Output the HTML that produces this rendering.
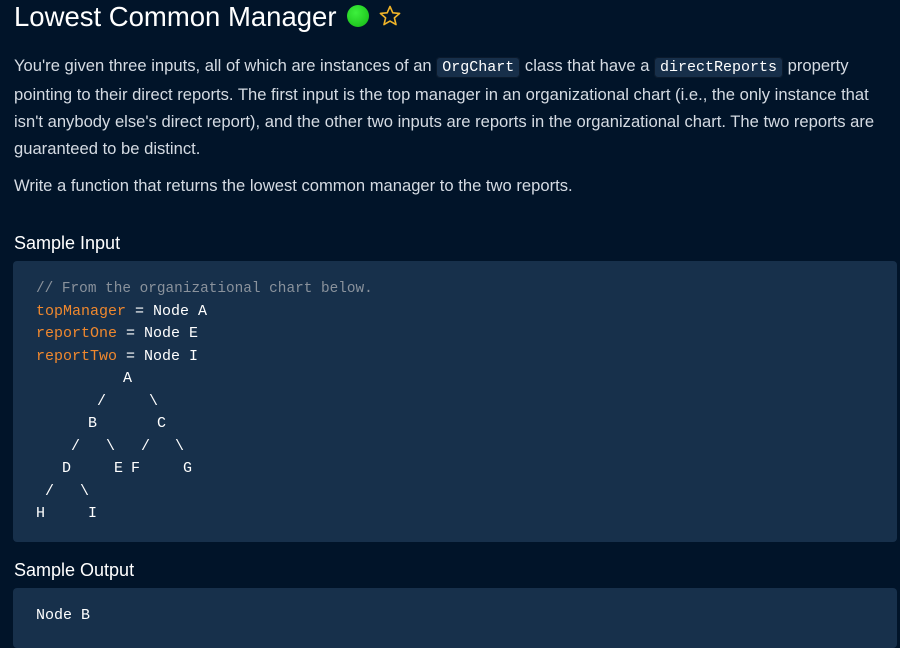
<!DOCTYPE html>
<html><head><meta charset="utf-8"><style>
body{margin:0;background:#011429;width:900px;height:640px;overflow:hidden;font-family:"Liberation Sans",sans-serif;color:#d5dbe3}
h1{position:absolute;left:14px;top:1px;margin:0;font-weight:normal;font-size:27.5px;color:#fff;white-space:nowrap}
.dot{display:inline-block;width:22px;height:22px;border-radius:50%;background:radial-gradient(circle at 40% 35%,#3df03d,#14b814);vertical-align:-1px;margin-left:10px}
.p{position:absolute;left:14px;font-size:16.6px;line-height:27px;white-space:nowrap}
code{font-family:"Liberation Mono",monospace;font-size:15px;background:#172f4a;color:#fff;border:1px solid #0b1a2c;border-radius:4px;padding:1px 5px}
.h{position:absolute;left:14px;font-size:18px;color:#fff}
.box{position:absolute;left:13px;width:884px;background:#17304b;border-radius:4px}
.m{position:absolute;font-family:"Liberation Mono",monospace;font-size:15px;color:#fff;white-space:pre;line-height:22.5px}
.o{color:#f0882e}.c{color:#8a929c;font-size:14.4px}
</style></head><body>
<h1>Lowest Common Manager<span class="dot"></span> <svg width="24" height="24" viewBox="0 0 24 24" style="vertical-align:-2px;margin-left:2px"><path d="M12 2.5l2.8 6.3 6.8.6-5.2 4.5 1.6 6.7L12 17.1l-6 3.5 1.6-6.7L2.4 9.4l6.8-.6z" fill="none" stroke="#f0b429" stroke-width="1.6" stroke-linejoin="round"/></svg></h1>
<div class="p" style="top:52px">You're given three inputs, all of which are instances of an <code>OrgChart</code> class that have a <code>directReports</code> property<br>pointing to their direct reports. The first input is the top manager in an organizational chart (i.e., the only instance that<br>isn't anybody else's direct report), and the other two inputs are reports in the organizational chart. The two reports are<br>guaranteed to be distinct.</div>
<div class="p" style="top:172px">Write a function that returns the lowest common manager to the two reports.</div>
<div class="h" style="top:233px">Sample Input</div>
<div class="box" style="top:261px;height:281px"></div>
<div class="m" style="left:36px;top:278px"><span class="c">// From the organizational chart below.</span>
<span class="o">topManager</span> = Node A
<span class="o">reportOne</span> = Node E
<span class="o">reportTwo</span> = Node I</div>
<div class="m" style="left:123px;top:368px">A</div>
<div class="m" style="left:97px;top:391px">/</div>
<div class="m" style="left:149px;top:391px">\</div>
<div class="m" style="left:88px;top:413px">B</div>
<div class="m" style="left:157px;top:413px">C</div>
<div class="m" style="left:71px;top:436px">/</div>
<div class="m" style="left:106px;top:436px">\</div>
<div class="m" style="left:141px;top:436px">/</div>
<div class="m" style="left:175px;top:436px">\</div>
<div class="m" style="left:62px;top:458px">D</div>
<div class="m" style="left:114px;top:458px">E</div>
<div class="m" style="left:131px;top:458px">F</div>
<div class="m" style="left:183px;top:458px">G</div>
<div class="m" style="left:45px;top:481px">/</div>
<div class="m" style="left:80px;top:481px">\</div>
<div class="m" style="left:36px;top:503px">H</div>
<div class="m" style="left:88px;top:503px">I</div>
<div class="h" style="top:560px">Sample Output</div>
<div class="box" style="top:588px;height:60px"></div>
<div class="m" style="left:36px;top:605px">Node B</div>
</body></html>
